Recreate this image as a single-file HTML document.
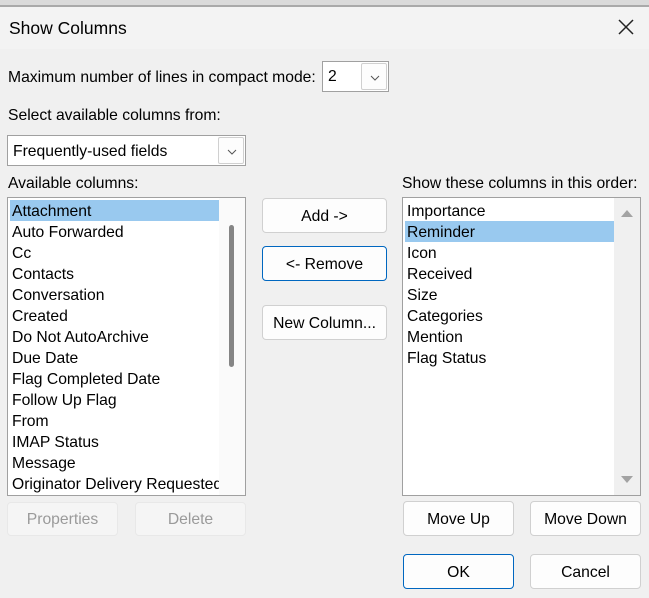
<!DOCTYPE html>
<html><head><meta charset="utf-8"><style>
*{box-sizing:border-box;margin:0;padding:0}
body{width:649px;height:598px;background:#f0f0f0;font-family:"Liberation Sans",sans-serif;font-size:15.7px;color:#000;position:relative;overflow:hidden}
.a{position:absolute}
.t{position:absolute;white-space:nowrap;line-height:20px}
.btn{position:absolute;background:#fdfdfd;border:1px solid #d0d0d0;border-radius:4px;text-align:center;font-size:15.7px;display:flex;align-items:center;justify-content:center;padding-top:2px}
.dis{background:#f5f5f5;border-color:#e8e8e8;color:#9a9a9a}
.list{position:absolute;background:#fff;border:1px solid #a0a0a0}
.it{position:absolute;left:2px;height:21px;line-height:24px;padding-left:2px;white-space:nowrap;overflow:hidden}
.sel{background:#99c9ef}
.combo{position:absolute;background:#fff;border:1px solid #a0a0a0}
.dd{position:absolute;top:1px;bottom:1px;right:1px;width:26px;border:1px solid #d0d0d0;border-radius:2px;background:#fdfdfd}
</style></head><body>
<div class="a" style="left:0;top:0;width:649px;height:5px;background:#dadada"></div>
<div class="a" style="left:0;top:5px;width:649px;height:2px;background:#a9a9a9"></div>
<div class="a" style="left:0;top:7px;width:649px;height:42px;background:#f3f3f3"></div>
<div class="t" style="left:9px;top:18px;font-size:17.5px">Show Columns</div>
<svg class="a" style="left:617px;top:18px" width="18" height="18" viewBox="0 0 18 18"><path d="M2 2L16 16M16 2L2 16" stroke="#222" stroke-width="1.5"/></svg>

<div class="t" style="left:8px;top:68px">Maximum number of lines in compact mode:</div>
<div class="combo" style="left:322px;top:61px;width:67px;height:31px"><div class="t" style="left:5px;top:5px">2</div><div class="dd"><svg class="a" style="left:8px;top:11px" width="10" height="6"><path d="M1 1L5 5L9 1" stroke="#555" fill="none"/></svg></div></div>

<div class="t" style="left:8px;top:106px">Select available columns from:</div>
<div class="combo" style="left:7px;top:135px;width:239px;height:31px"><div class="t" style="left:5px;top:6px">Frequently-used fields</div><div class="dd"><svg class="a" style="left:8px;top:11px" width="10" height="6"><path d="M1 1L5 5L9 1" stroke="#555" fill="none"/></svg></div></div>

<div class="t" style="left:8px;top:174px">Available columns:</div>
<div class="t" style="left:402px;top:174px">Show these columns in this order:</div>

<div class="list" style="left:7px;top:197px;width:239px;height:299px;overflow:hidden">
<div class="it sel" style="top:2px;width:209px">Attachment</div>
<div class="it" style="top:23px;width:209px">Auto Forwarded</div>
<div class="it" style="top:44px;width:209px">Cc</div>
<div class="it" style="top:65px;width:209px">Contacts</div>
<div class="it" style="top:86px;width:209px">Conversation</div>
<div class="it" style="top:107px;width:209px">Created</div>
<div class="it" style="top:128px;width:209px">Do Not AutoArchive</div>
<div class="it" style="top:149px;width:209px">Due Date</div>
<div class="it" style="top:170px;width:209px">Flag Completed Date</div>
<div class="it" style="top:191px;width:209px">Follow Up Flag</div>
<div class="it" style="top:212px;width:209px">From</div>
<div class="it" style="top:233px;width:209px">IMAP Status</div>
<div class="it" style="top:254px;width:209px">Message</div>
<div class="it" style="top:275px;width:209px">Originator Delivery Requested</div>
<div class="a" style="left:211px;top:0;width:26px;height:297px;background:#fafafa"></div>
<div class="a" style="left:221px;top:27px;width:5px;height:142px;background:#858585;border-radius:3px"></div>
</div>

<div class="list" style="left:402px;top:197px;width:239px;height:299px;overflow:hidden">
<div class="a" style="left:211px;top:0;width:26px;height:297px;background:#f0f0f0"></div>
<svg class="a" style="left:217px;top:10px" width="14" height="10"><path d="M1 9L7 2L13 9Z" fill="#a3a3a3"/></svg>
<svg class="a" style="left:217px;top:277px" width="14" height="10"><path d="M1 1L7 8L13 1Z" fill="#a3a3a3"/></svg>
<div class="it" style="top:2px;width:209px">Importance</div>
<div class="it sel" style="top:23px;width:209px">Reminder</div>
<div class="it" style="top:44px;width:209px">Icon</div>
<div class="it" style="top:65px;width:209px">Received</div>
<div class="it" style="top:86px;width:209px">Size</div>
<div class="it" style="top:107px;width:209px">Categories</div>
<div class="it" style="top:128px;width:209px">Mention</div>
<div class="it" style="top:149px;width:209px">Flag Status</div>
</div>

<div class="btn" style="left:262px;top:198px;width:125px;height:35px">Add -&gt;</div>
<div class="btn" style="left:262px;top:246px;width:125px;height:35px;border-color:#0067c0">&lt;- Remove</div>
<div class="btn" style="left:262px;top:305px;width:125px;height:35px">New Column...</div>

<div class="btn dis" style="left:7px;top:502px;width:111px;height:34px">Properties</div>
<div class="btn dis" style="left:135px;top:502px;width:111px;height:34px">Delete</div>
<div class="btn" style="left:403px;top:501px;width:111px;height:35px">Move Up</div>
<div class="btn" style="left:530px;top:501px;width:111px;height:35px">Move Down</div>
<div class="btn" style="left:403px;top:554px;width:111px;height:35px;border-color:#0067c0">OK</div>
<div class="btn" style="left:530px;top:554px;width:111px;height:35px">Cancel</div>
</body></html>
